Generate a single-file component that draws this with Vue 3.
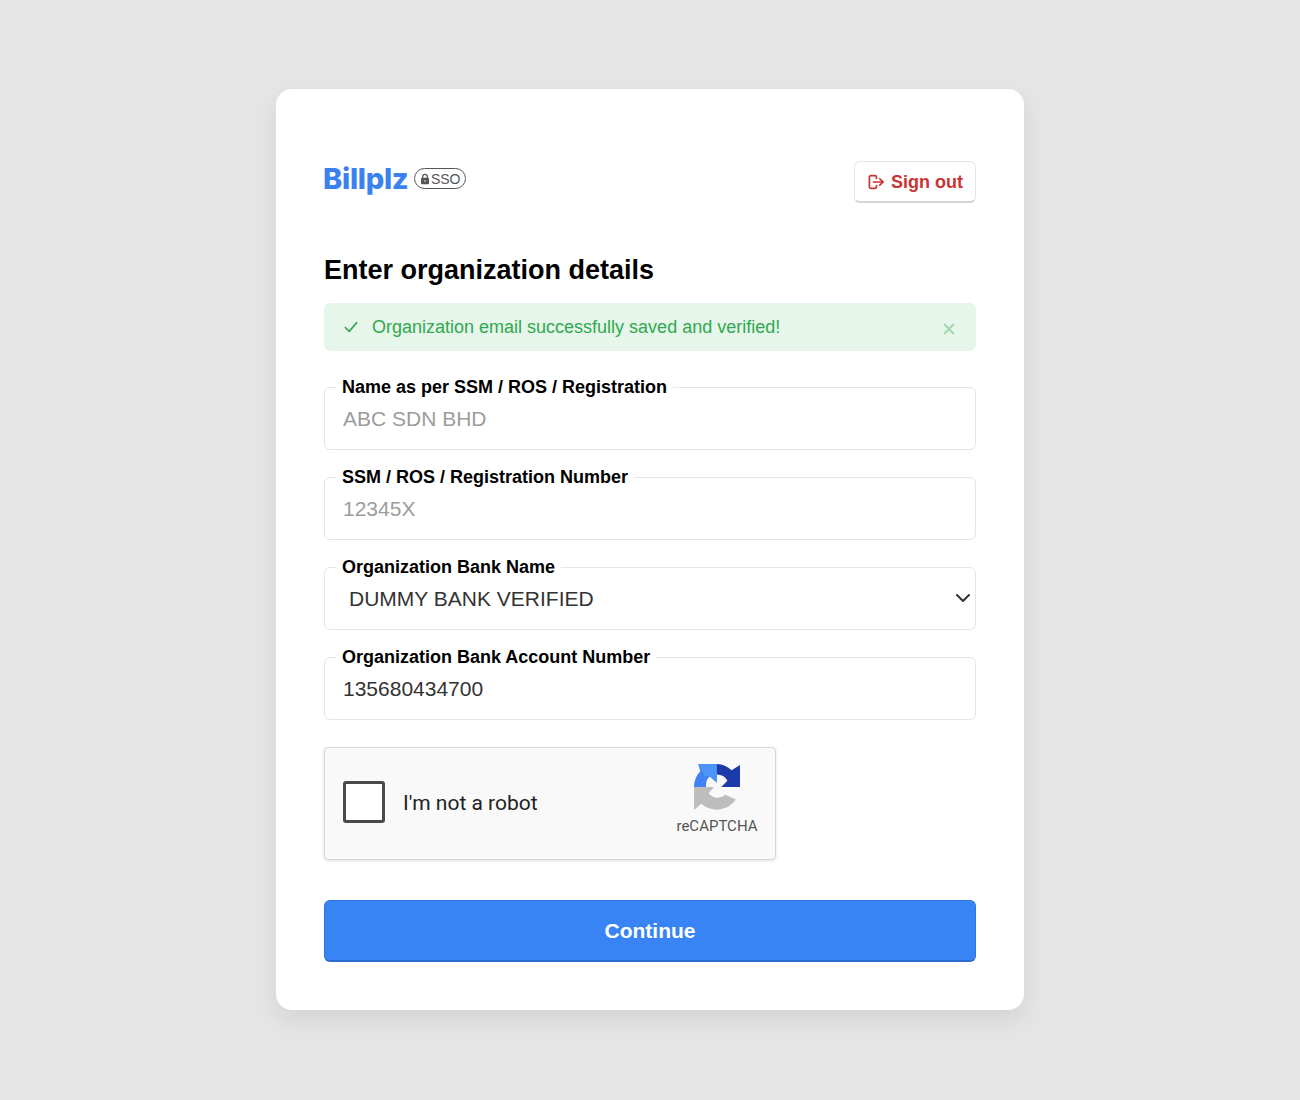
<script setup>
const fields = [
  { label: 'Name as per SSM / ROS / Registration', placeholder: 'ABC SDN BHD', value: '' },
  { label: 'SSM / ROS / Registration Number', placeholder: '12345X', value: '' },
]
</script>

<template>
  <main class="page">
    <section class="card">
      <header class="header">
        <div class="brand">
          <span class="logo">Billplz</span>
          <span class="sso">
            <svg class="lock" viewBox="0 0 12 14" aria-hidden="true">
              <path d="M3.2 6V4.200a2.800 2.800 0 0 1 5.600 0V6" fill="none" stroke="#555" stroke-width="1.5" />
              <rect x="1.200" y="5.600" width="9.600" height="7.600" rx="1.200" fill="#555" />
              <circle cx="6" cy="9.400" r="1" fill="#fff" />
            </svg>SSO
          </span>
        </div>
        <button class="signout" type="button">
          <svg class="signout-icon" viewBox="0 0 16 16" aria-hidden="true">
            <path d="M8.500 4.500V3.200A1.600 1.600 0 0 0 6.900 1.600H3A1.600 1.600 0 0 0 1.400 3.200v9.600A1.600 1.600 0 0 0 3 14.400h3.900a1.600 1.600 0 0 0 1.600-1.600v-1.300M5.500 8h9.600M11.800 4.800 15.100 8l-3.300 3.200" fill="none" stroke="currentColor" stroke-width="1.700" stroke-linecap="round" stroke-linejoin="round" />
          </svg>
          <span class="signout-text">Sign out</span>
        </button>
      </header>

      <h1 class="title">Enter organization details</h1>

      <div class="alert">
        <svg class="check" viewBox="0 0 16 16" aria-hidden="true">
          <path d="M1.500 8.500 6 13l8.500-10" fill="none" stroke="currentColor" stroke-width="1.800" stroke-linecap="round" stroke-linejoin="round" />
        </svg>
        <span class="alert-text">Organization email successfully saved and verified!</span>
        <svg class="close" viewBox="0 0 12 12" aria-hidden="true">
          <path d="M1 1l10 10M11 1 1 11" fill="none" stroke="currentColor" stroke-width="2" />
        </svg>
      </div>

      <div class="fields">
        <label v-for="field in fields" :key="field.label" class="field">
          <span class="field-label">{{ field.label }}</span>
          <input class="control" :placeholder="field.placeholder" :value="field.value" />
        </label>

        <label class="field">
          <span class="field-label">Organization Bank Name</span>
          <select class="control select">
            <option>DUMMY BANK VERIFIED</option>
          </select>
          <svg class="chevron" viewBox="0 0 14 8" aria-hidden="true">
            <path d="M1 1l6 6 6-6" fill="none" stroke="currentColor" stroke-width="2" stroke-linecap="round" stroke-linejoin="round" />
          </svg>
        </label>

        <label class="field">
          <span class="field-label">Organization Bank Account Number</span>
          <input class="control" value="135680434700" />
        </label>
      </div>

      <div class="captcha">
        <span class="captcha-box"></span>
        <span class="captcha-text">I'm not a robot</span>
        <div class="captcha-brand">
          <svg class="captcha-logo" viewBox="1 1 44 45" aria-hidden="true">
            <path d="M1 23H20L15 29A11 11 0 0 0 31 30.500L41 35A22 22 0 0 1 8 39L1 45Z" fill="#bdbdbd" />
            <path d="M23 1V19L16 13A11.500 11.500 0 0 0 12.500 23H1A22 22 0 0 1 7 8L5 1Z" fill="#3f82f2" />
            <path d="M5 1H23V19L16 13 11 12Z" fill="#4d94f8" />
            <path d="M23 1A22 22 0 0 1 37 7L45 2V23H27L33 17A11.500 11.500 0 0 0 23 11Z" fill="#1c3aa9" />
          </svg>
          <span class="captcha-name">reCAPTCHA</span>
        </div>
      </div>

      <button class="continue" type="button">Continue</button>
    </section>
  </main>
</template>

<style>
html,
body {
  margin: 0;
  background: #e5e5e5;
}
</style>

<style scoped>
.page {
  box-sizing: border-box;
  min-height: 1100px;
  display: flex;
  justify-content: center;
  align-items: flex-start;
  padding-top: 89px;
  background: #e5e5e5;
  font-family: "Liberation Sans", Arial, sans-serif;
}

.card {
  box-sizing: border-box;
  width: 748px;
  height: 921px;
  padding: 48px;
  background: #fff;
  border-radius: 16px;
  box-shadow: 0 10px 24px rgba(0, 0, 0, 0.08);
  display: flex;
  flex-direction: column;
}

.header {
  display: flex;
  justify-content: space-between;
  align-items: flex-start;
  padding-top: 24px;
  height: 41px;
}

.brand {
  display: flex;
  align-items: center;
  gap: 6px;
  height: 36px;
}

.logo {
  font-family: Inter, "Liberation Sans", sans-serif;
  font-size: 29px;
  line-height: 36px;
  font-weight: 800;
  color: #3b82f0;
  letter-spacing: -0.3px;
  margin-left: -1px;
}

.sso {
  box-sizing: border-box;
  display: flex;
  align-items: center;
  height: 21px;
  padding: 0 5px 0 4.500px;
  border: 1.500px solid #555;
  border-radius: 11px;
  font-size: 14px;
  color: #555;
  margin-top: -1px;
}

.lock {
  width: 10px;
  height: 12px;
  margin-right: 1px;
}

.signout {
  box-sizing: border-box;
  display: flex;
  align-items: center;
  gap: 7px;
  width: 122px;
  height: 42px;
  padding: 0 12px 0 13px;
  background: #fff;
  border: 1px solid #e5e5e5;
  border-bottom: 2px solid #d4d4d4;
  border-radius: 6px;
  color: #c93434;
  font: bold 18px "Liberation Sans", Arial, sans-serif;
  white-space: nowrap;
}

.signout-icon {
  width: 16px;
  height: 16px;
  flex: none;
}

.signout-text {
  padding-top: 1px;
}

.title {
  margin: 52px 0 17px;
  font-size: 27px;
  line-height: 32px;
  font-weight: 700;
  color: #000;
}

.alert {
  box-sizing: border-box;
  display: flex;
  align-items: center;
  height: 48px;
  padding: 0 20px;
  background: #e6f6ea;
  border-radius: 6px;
  color: #2fa84f;
  font-size: 18px;
}

.check {
  width: 14px;
  height: 14px;
  flex: none;
  margin-right: 14px;
}

.alert-text {
  flex: 1;
  padding-top: 2px;
}

.close {
  width: 12px;
  height: 12px;
  color: #9fd8b0;
  margin: 5px 1px 0 0;
}

.fields {
  display: flex;
  flex-direction: column;
  gap: 27px;
  margin-top: 36px;
}

.field {
  position: relative;
  display: block;
  height: 63px;
}

.field-label {
  position: absolute;
  left: 12px;
  top: -10px;
  padding: 0 6px;
  background: #fff;
  font-size: 18px;
  line-height: 20px;
  font-weight: 700;
  color: #000;
}

.control {
  box-sizing: border-box;
  display: block;
  width: 100%;
  height: 63px;
  padding: 2px 18px 0;
  background: #fff;
  border: 1px solid #e5e5e5;
  border-radius: 6px;
  outline: none;
  font: 21px "Liberation Sans", Arial, sans-serif;
  color: #333;
}

.control::placeholder {
  color: #9c9c9c;
  opacity: 1;
}

.select {
  appearance: none;
  padding: 0 18px 0 24px;
}

.chevron {
  position: absolute;
  right: 6px;
  top: 27px;
  width: 14px;
  height: 8px;
  color: #333;
  pointer-events: none;
}

.captcha {
  box-sizing: border-box;
  display: flex;
  align-items: center;
  width: 452px;
  height: 114px;
  margin-top: 27px;
  padding: 0 18px;
  background: #f9f9f9;
  border: 1px solid #d6d6d6;
  border-radius: 4px;
  box-shadow: 0 1px 3px rgba(0, 0, 0, 0.12);
}

.captcha-box {
  box-sizing: border-box;
  width: 42px;
  height: 42px;
  flex: none;
  margin-top: -2px;
  background: #fff;
  border: 3px solid #4a4a4a;
  border-radius: 3px;
}

.captcha-text {
  flex: 1;
  margin-left: 18px;
  font-family: Roboto, "Liberation Sans", sans-serif;
  font-size: 21px;
  color: #222;
}

.captcha-brand {
  display: flex;
  flex-direction: column;
  align-items: center;
  width: 82px;
  margin: -7px -1px 0 0;
}

.captcha-logo {
  width: 46px;
  height: 47px;
}

.captcha-name {
  margin-top: 6px;
  font-family: Roboto, "Liberation Sans", sans-serif;
  font-size: 15px;
  line-height: 18px;
  color: #555;
}

.continue {
  height: 63px;
  margin-top: 40px;
  padding-top: 2px;
  background: #3884f4;
  border: 1px solid #2f76e0;
  border-bottom: 2px solid #2a6bd0;
  border-radius: 6px;
  color: #fff;
  font: bold 21px "Liberation Sans", Arial, sans-serif;
}
</style>
